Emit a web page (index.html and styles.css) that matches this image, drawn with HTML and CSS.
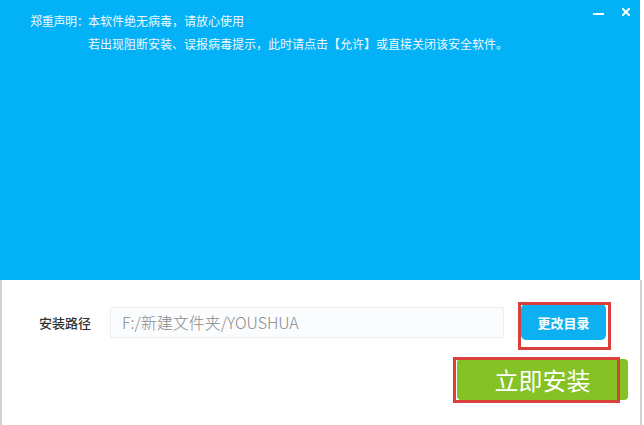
FILE: index.html
```html
<!DOCTYPE html>
<html lang="zh-CN">
<head>
<meta charset="utf-8">
<title>安装</title>
<link rel="stylesheet" href="styles.css">
</head>
<body>
<div class="window">
  <header class="header">
    <div class="notice">
      <span class="notice-label">郑重声明：</span>
      <div class="notice-lines">
        <p>本软件绝无病毒，请放心使用</p>
        <p>若出现阻断安装、误报病毒提示，此时请点击【允许】或直接关闭该安全软件。</p>
      </div>
    </div>
    <div class="controls">
      <span class="ctl-min"></span>
      <svg class="ctl-close" width="8" height="8" viewBox="0 0 8 8"><path d="M1 1 L7 7 M7 1 L1 7" stroke="#fff" stroke-width="2" stroke-linecap="square"/></svg>
    </div>
  </header>
  <main class="main">
    <div class="path-row">
      <span class="path-label">安装路径</span>
      <div class="path-input">F:/新建文件夹/YOUSHUA</div>
      <button class="btn-change marked">更改目录</button>
    </div>
    <div class="install-row">
      <button class="btn-install marked">立即安装</button>
    </div>
  </main>
</div>
</body>
</html>
```

FILE: styles.css
```css
html, body {
  margin: 0;
  padding: 0;
  background: #ffffff;
}
body {
  font-family: "Noto Sans CJK SC", "Noto Sans", sans-serif;
  width: 644px;
  height: 425px;
  overflow: hidden;
}
.window {
  width: 642px;
}
.header {
  width: 640px;
  height: 280px;
  background: #02b1f6;
  display: flex;
  justify-content: space-between;
  align-items: flex-start;
}
.notice {
  display: grid;
  grid-template-columns: 58px auto;
  padding: 9px 0 0 30px;
  font-size: 12px;
  line-height: 23px;
  color: #eef8ff;
}
.notice-label {
  white-space: nowrap;
  letter-spacing: -0.3px;
}
.notice-lines p {
  margin: 0;
}
.controls {
  display: flex;
  align-items: center;
  gap: 18px;
  padding: 8px 10px 0 0;
}
.ctl-min {
  display: block;
  width: 11px;
  height: 2px;
  background: #ffffff;
  margin-top: 4px;
}
.ctl-close {
  display: block;
}
.main {
  box-sizing: border-box;
  width: 642px;
  height: 145px;
  border-left: 2px solid #d2d2d2;
  border-right: 2px solid #d2d2d2;
  padding: 24px 12px 0 37px;
}
.path-row {
  display: flex;
  align-items: center;
  height: 36px;
}
.path-label {
  width: 71px;
  font-size: 13px;
  font-weight: 500;
  color: #333333;
}
.path-input {
  box-sizing: border-box;
  width: 394px;
  height: 31px;
  border: 1px solid #eceff1;
  border-radius: 2px;
  background: #fbfcfd;
  padding-left: 11px;
  font-size: 16px;
  font-weight: 300;
  line-height: 29px;
  color: #8a8a8a;
}
.btn-change {
  margin-left: 17px;
  width: 85px;
  height: 36px;
  border: 0;
  border-radius: 5px;
  background: #0db0f1;
  color: #ffffff;
  font-family: inherit;
  font-size: 13px;
  font-weight: 700;
  padding: 0;
}
.install-row {
  display: flex;
  justify-content: flex-end;
  margin-top: 19px;
}
.btn-install {
  width: 171px;
  height: 41px;
  border: 0;
  border-radius: 4px;
  background: #85c226;
  color: #ffffff;
  font-family: inherit;
  font-size: 24px;
  line-height: 41px;
  padding: 0;
}
.marked {
  position: relative;
}
.marked::after {
  content: "";
  position: absolute;
  box-sizing: border-box;
  border: 3px solid #d9403c;
}
.btn-change::after {
  left: -3px;
  top: -2px;
  width: 93px;
  height: 48px;
}
.btn-install::after {
  left: -4px;
  top: -2px;
  width: 167px;
  height: 46px;
}
```
